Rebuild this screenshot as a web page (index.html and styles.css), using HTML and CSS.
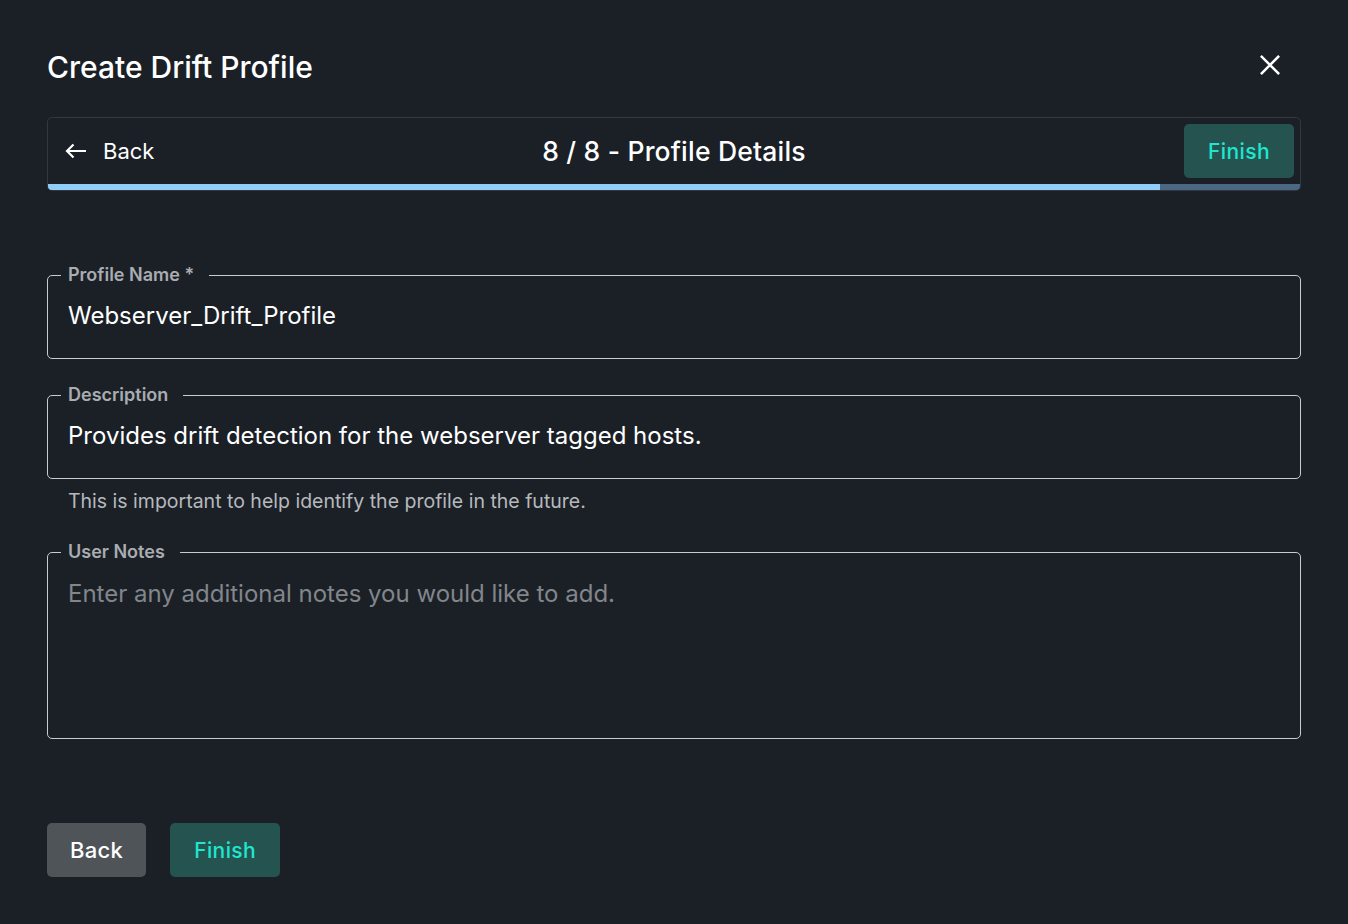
FILE: index.html
```html
<!DOCTYPE html>
<html lang="en">
<head>
<meta charset="utf-8">
<title>Create Drift Profile</title>
<link rel="stylesheet" href="styles.css">
</head>
<body>
<main class="dialog">
  <header class="dialog-header">
    <h1 class="dialog-title">Create Drift Profile</h1>
    <button class="close-btn" aria-label="Close">
      <svg width="28" height="28" viewBox="0 0 24 24"><path d="M5 5 L19 19 M19 5 L5 19" stroke="#ffffff" stroke-width="2.2" stroke-linecap="square" fill="none"/></svg>
    </button>
  </header>

  <section class="stepper">
    <div class="stepper-row">
      <button class="stepper-back">
        <svg width="22" height="16" viewBox="0 0 22 16"><path d="M21 8 H2 M8.5 1.5 L2 8 L8.5 14.5" stroke="#ffffff" stroke-width="2.2" fill="none" stroke-linecap="butt" stroke-linejoin="miter"/></svg>
        <span>Back</span>
      </button>
      <div class="stepper-title">8 / 8 - Profile Details</div>
      <div class="stepper-actions">
        <button class="btn btn-finish">Finish</button>
      </div>
    </div>
    <div class="progress"><div class="progress-fill" style="width: 88.8%"></div></div>
  </section>

  <form class="form">
    <fieldset class="field">
      <legend>Profile Name *</legend>
      <input class="field-input" type="text" value="Webserver_Drift_Profile">
    </fieldset>

    <div class="field-group">
      <fieldset class="field">
        <legend>Description</legend>
        <input class="field-input" type="text" value="Provides drift detection for the webserver tagged hosts.">
      </fieldset>
      <p class="helper">This is important to help identify the profile in the future.</p>
    </div>

    <fieldset class="field field-notes">
      <legend>User Notes</legend>
      <textarea class="field-input field-textarea" placeholder="Enter any additional notes you would like to add."></textarea>
    </fieldset>
  </form>

  <footer class="actions">
    <button class="btn btn-back">Back</button>
    <button class="btn btn-finish">Finish</button>
  </footer>
</main>
</body>
</html>
```

FILE: styles.css
```css
* { box-sizing: border-box; }

html, body {
  margin: 0;
  padding: 0;
  background: #1b2027;
  color: #ffffff;
  font-family: Inter, "Noto Sans", "Liberation Sans", sans-serif;
}

.dialog {
  padding: 46px 47px 0 47px;
}

.dialog-header {
  display: flex;
  align-items: center;
  justify-content: space-between;
  height: 42px;
}

.dialog-title {
  margin: 0;
  font-size: 30px;
  font-weight: 500;
  line-height: 42px;
  letter-spacing: 0;
}

.close-btn {
  background: none;
  border: none;
  padding: 0;
  margin-right: 17px;
  margin-top: -4px;
  width: 28px;
  height: 28px;
  display: flex;
  align-items: center;
  justify-content: center;
  cursor: pointer;
}

.stepper {
  margin-top: 29px;
  border: 1px solid #33383f;
  border-radius: 5px;
  overflow: hidden;
}

.stepper-row {
  display: grid;
  grid-template-columns: 1fr auto 1fr;
  align-items: center;
  padding: 6px 6px 0 6px;
  height: 60px;
}

.stepper-back {
  justify-self: start;
  margin-left: 11px;
  display: flex;
  align-items: center;
  gap: 16px;
  background: none;
  border: none;
  color: #ffffff;
  font-family: inherit;
  font-size: 22px;
  font-weight: 400;
  padding: 0;
  cursor: pointer;
}

.stepper-title {
  font-size: 26.5px;
  font-weight: 500;
  letter-spacing: 0.2px;
}

.stepper-actions {
  justify-self: end;
}

.btn {
  border: none;
  border-radius: 5px;
  height: 54px;
  font-family: inherit;
  font-size: 21px;
  font-weight: 500;
  letter-spacing: 0.4px;
  cursor: pointer;
}

.btn-finish {
  background: #245350;
  color: #1fe6cf;
  padding: 0 24px;
}

.btn-back {
  background: #4f5459;
  color: #ffffff;
  font-size: 22px;
  letter-spacing: 0.3px;
  padding: 0 23px;
}

.progress {
  margin-top: 6px;
  height: 6px;
  background: #4a6883;
}

.progress-fill {
  height: 100%;
  background: #90cbf9;
}

.form {
  margin-top: 74px;
  display: flex;
  flex-direction: column;
  gap: 26px;
}

.field {
  margin: 0;
  border: 1px solid #c9cbcd;
  border-radius: 5px;
  padding: 17px 20px 29px 20px;
  min-width: 0;
}

.field legend {
  margin-left: -7px;
  padding: 0 15px 0 7px;
  font-size: 18px;
  font-weight: 600;
  color: #a9acb0;
  line-height: 20px;
}

.field-input {
  display: block;
  width: 100%;
  background: transparent;
  border: none;
  outline: none;
  color: #ffffff;
  font-family: inherit;
  font-size: 24px;
  line-height: 27px;
  height: 27px;
  padding: 0;
  letter-spacing: 0;
}

.field-input::placeholder {
  color: #82868b;
  opacity: 1;
}

.field-group {
  display: flex;
  flex-direction: column;
}

.field-group .helper {
  margin: 10px 0 0 21px;
  font-size: 19.5px;
  line-height: 24px;
  color: #b6b9bd;
}

.form .field-group + .field-notes {
  margin-top: 3px;
}

.field-notes {
  padding-bottom: 0;
}

.field-notes .field-textarea {
  height: 158px;
  resize: none;
  margin-top: 1px;
}

.actions {
  margin-top: 84px;
  display: flex;
  gap: 24px;
}
```
